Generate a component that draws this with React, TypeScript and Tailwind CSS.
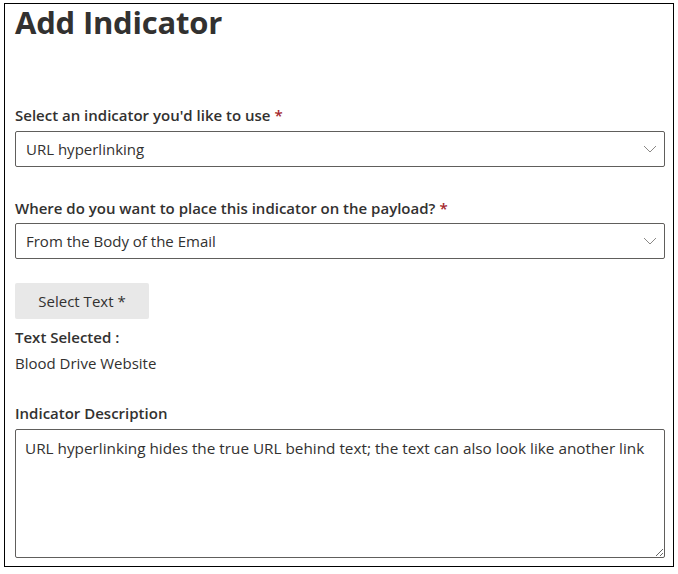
import React from 'react';

const ChevronDown: React.FC = () => (
  <svg width="14" height="8" viewBox="0 0 14 8" fill="none" className="text-[#8a8886]">
    <path d="M1 1l6 6 6-6" stroke="currentColor" strokeWidth="1" />
  </svg>
);

const Required: React.FC = () => <span className="text-[#a4262c] ml-1">*</span>;

const Dropdown: React.FC<{ value: string }> = ({ value }) => (
  <div className="h-[36px] border border-[#605e5c] rounded-[2px] flex items-center justify-between pl-[10px] pr-[7px] text-[15px] text-[#323130]">
    <span>{value}</span>
    <ChevronDown />
  </div>
);

const App: React.FC = () => {
  return (
    <div className="bg-white w-[678px] h-[574px] pt-[3px] pl-[4px]" style={{ fontFamily: '"Open Sans", "Noto Sans", sans-serif' }}>
      <div className="w-[670px] h-[564px] border border-black pl-[10px] pr-[8px] text-[#323130]">
        <h1 className="text-[31px] font-bold leading-[38px] -mt-[1px] tracking-[-0.2px]">Add Indicator</h1>

        <div className="mt-[64px]">
          <label className="block text-[15px] font-semibold leading-[20px]">
            Select an indicator you'd like to use<Required />
          </label>
          <div className="mt-[6px]">
            <Dropdown value="URL hyperlinking" />
          </div>
        </div>

        <div className="mt-[31px]">
          <label className="block text-[15px] font-semibold leading-[20px]">
            Where do you want to place this indicator on the payload?<Required />
          </label>
          <div className="mt-[5px]">
            <Dropdown value="From the Body of the Email" />
          </div>
        </div>

        <button className="mt-[24px] h-[36px] w-[134px] bg-[#e8e8e8] rounded-[2px] text-[15px] font-normal text-[#323130]">
          Select Text *
        </button>

        <div className="mt-[6px] text-[15px] font-semibold leading-[24px]">Text Selected :</div>
        <div className="mt-[2px] text-[15px] leading-[24px]">Blood Drive Website</div>

        <div className="mt-[26px] text-[15px] font-semibold leading-[24px]">Indicator Description</div>
        <textarea
          className="mt-[4px] block w-full h-[129px] border border-[#605e5c] rounded-[2px] px-[9px] py-[8px] text-[15.3px] leading-[20px] text-[#323130] resize-y outline-none"
          defaultValue="URL hyperlinking hides the true URL behind text; the text can also look like another link"
        />
      </div>
    </div>
  );
};

export default App;
